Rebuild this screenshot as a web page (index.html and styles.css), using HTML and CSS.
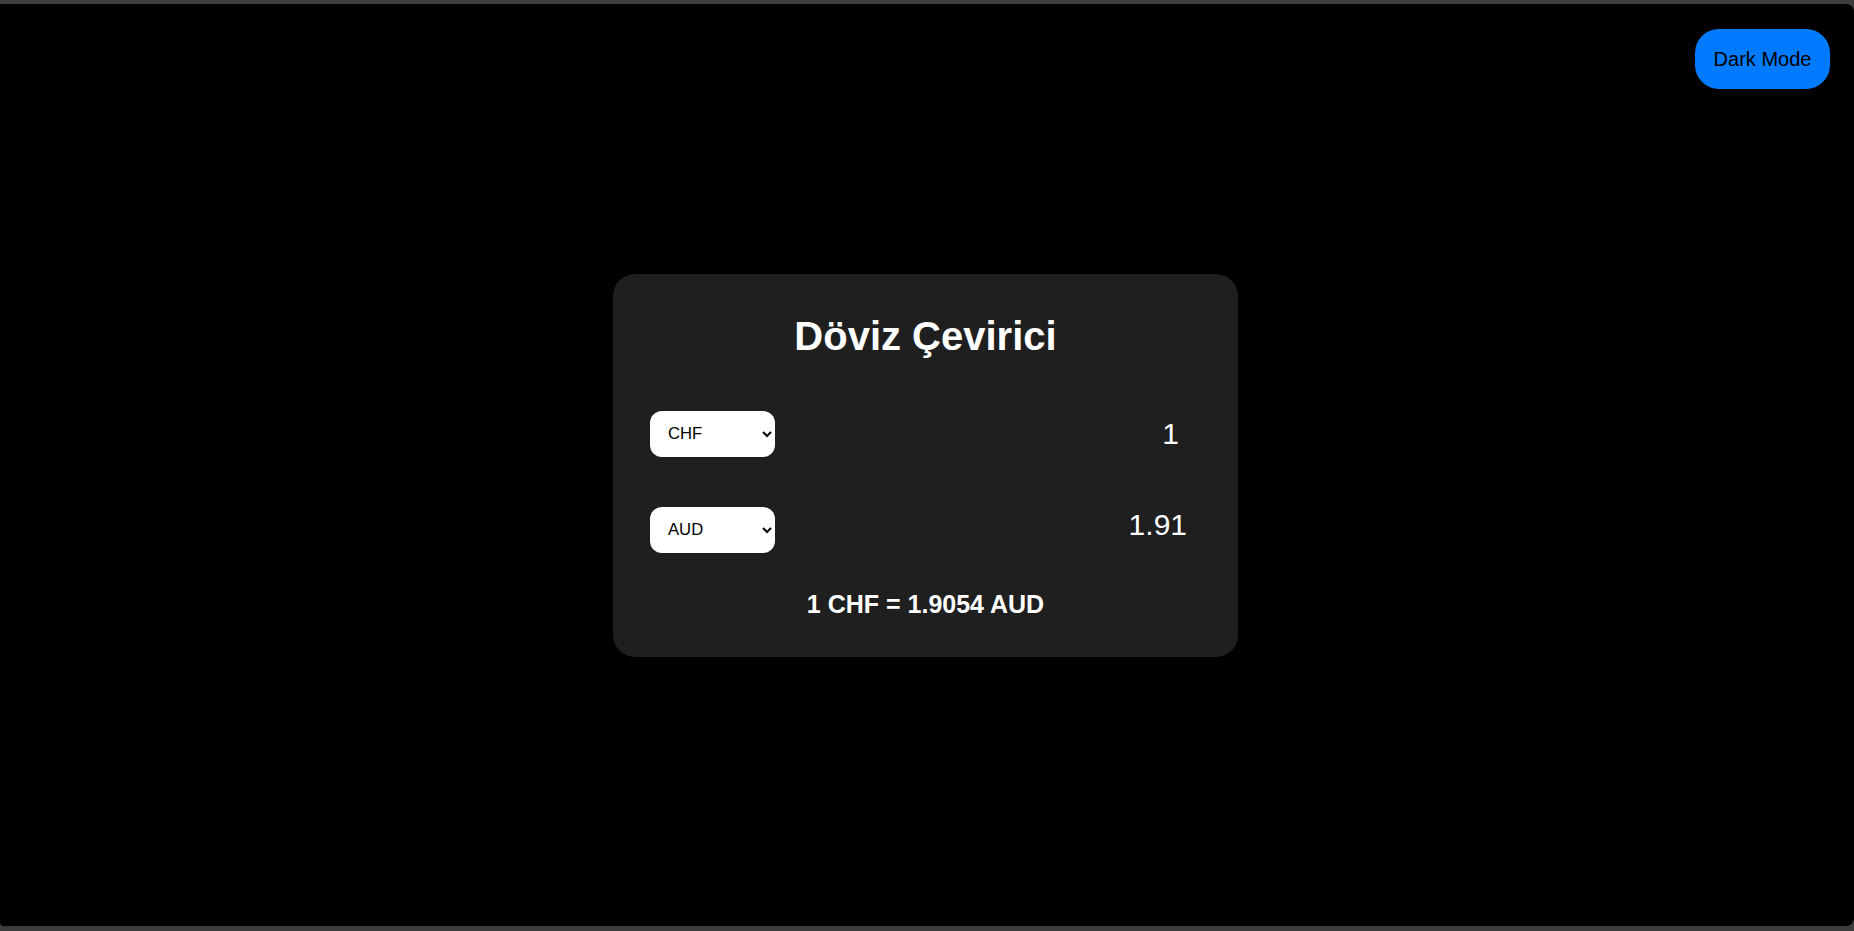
FILE: index.html
```html
<!DOCTYPE html>
<html lang="tr">
<head>
<meta charset="utf-8">
<title>Döviz Çevirici</title>
<link rel="stylesheet" href="styles.css">
</head>
<body>
<div class="viewport">
  <button class="mode-btn">Dark Mode</button>
  <div class="card">
    <h1 class="title">Döviz Çevirici</h1>
    <div class="row row-from">
      <select class="currency">
        <option selected>CHF</option>
        <option>AUD</option>
        <option>USD</option>
        <option>EUR</option>
      </select>
      <input class="amount amount-input" type="text" value="1">
    </div>
    <div class="row row-to">
      <select class="currency">
        <option>CHF</option>
        <option selected>AUD</option>
        <option>USD</option>
        <option>EUR</option>
      </select>
      <div class="amount amount-result">1.91</div>
    </div>
    <p class="rate">1 CHF = 1.9054 AUD</p>
  </div>
</div>
</body>
</html>
```

FILE: styles.css
```css
* {
  box-sizing: border-box;
}

html, body {
  margin: 0;
  padding: 0;
  background: #3c3c3c;
  font-family: "Liberation Sans", Arial, sans-serif;
}

body {
  padding: 4px 0 5px;
}

.viewport {
  position: relative;
  height: 922px;
  background: #000;
  border-radius: 0 8px 8px 4px;
  display: flex;
  align-items: center;
  justify-content: center;
}

.mode-btn {
  position: absolute;
  top: 25px;
  right: 24px;
  width: 135px;
  height: 60px;
  padding: 0;
  border: none;
  border-radius: 24px;
  background: #007bff;
  color: #000;
  font-family: "Liberation Sans", Arial, sans-serif;
  font-size: 20px;
  line-height: 24px;
}

.card {
  width: 625px;
  margin-left: -3px;
  background: #1f1f1f;
  border-radius: 22px;
  padding: 39px 37px 38px;
  color: #fff;
}

.title {
  margin: 0 0 52px;
  font-size: 40px;
  line-height: 46px;
  font-weight: bold;
  text-align: center;
}

.row {
  display: flex;
  justify-content: space-between;
  height: 46px;
}

.row-from {
  align-items: center;
}

.row-to {
  align-items: flex-start;
  margin-top: 50px;
}

.currency {
  width: 125px;
  height: 46px;
  padding: 0 8px 0 14px;
  border: none;
  border-radius: 12px;
  background: #fff;
  color: #000;
  font-family: "Liberation Sans", Arial, sans-serif;
  font-size: 16.67px;
}

.amount {
  width: 200px;
  font-family: "Liberation Sans", Arial, sans-serif;
  font-size: 30px;
  line-height: 34px;
  color: #fff;
  text-align: right;
}

.amount-input {
  height: 34px;
  border: none;
  outline: none;
  background: transparent;
  padding: 0 22px 0 0;
}

.amount-result {
  padding-top: 1px;
  padding-right: 14px;
}

.rate {
  margin: 37px 0 0;
  font-size: 25px;
  line-height: 29px;
  font-weight: bold;
  text-align: center;
}
```
